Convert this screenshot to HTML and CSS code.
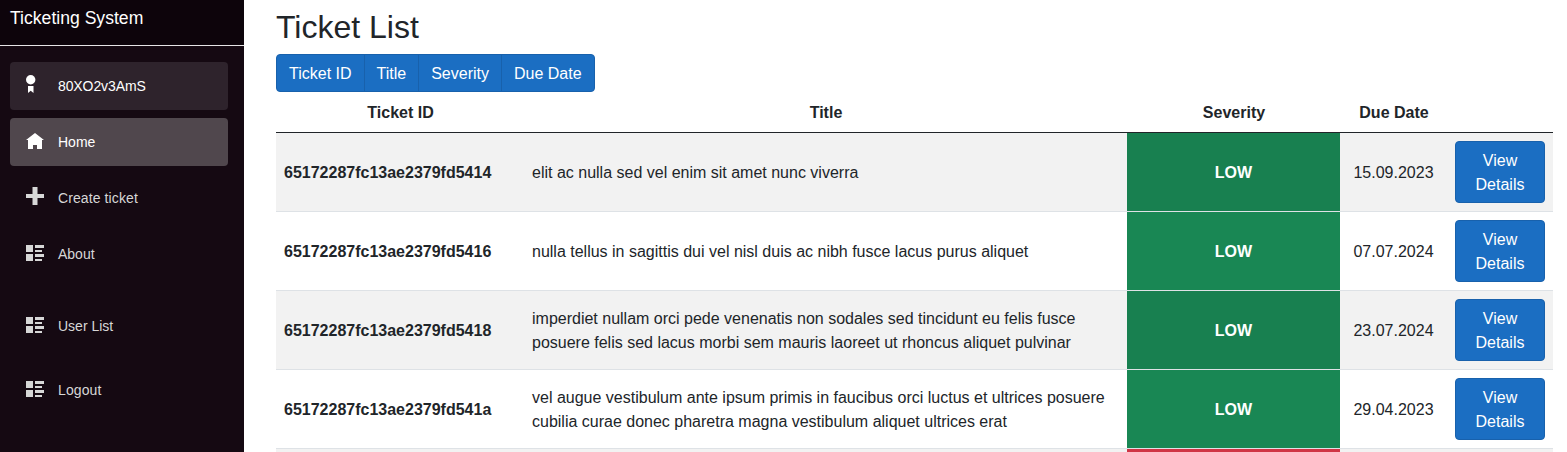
FILE: index.html
```
<!DOCTYPE html>
<html lang="en">
<head>
<meta charset="utf-8">
<title>Ticket List</title>
<link rel="stylesheet" href="styles.css">
</head>
<body>
<svg class="defs" width="0" height="0">
  <symbol id="badge" viewBox="0 0 18 18"><circle cx="4.7" cy="4.7" r="4.7"/><path d="M2 11h5.500v7L4.700 15.800 2 18z"/></symbol>
  <symbol id="home" viewBox="0 0 18 18"><path d="M9 2 0 9h2v9h5v-4h4v4h5V9h2z"/></symbol>
  <symbol id="plus" viewBox="0 0 18 18"><path d="M6.500 0h5v7H18v4h-6.500v7h-5v-7H0V7h6.500z"/></symbol>
  <symbol id="list" viewBox="0 0 18 18"><path d="M0 2h7v7H0zM0 11h7v7H0zM9 2h9v3H9zM9 7h7v2H9zM9 11h9v3H9zM9 16h7v2H9z"/></symbol>
</svg>
<div class="page">
  <aside class="sidebar">
    <div class="brand">Ticketing System</div>
    <nav class="nav">
      <a class="item user"><svg class="icon"><use href="#badge"/></svg>80XO2v3AmS</a>
      <a class="item active"><svg class="icon"><use href="#home"/></svg>Home</a>
      <a class="item"><svg class="icon"><use href="#plus"/></svg><span class="wide">Create ticket</span></a>
      <a class="item about"><svg class="icon"><use href="#list"/></svg>About</a>
      <a class="item users"><svg class="icon"><use href="#list"/></svg>User List</a>
      <a class="item"><svg class="icon"><use href="#list"/></svg><span class="wide">Logout</span></a>
    </nav>
  </aside>
  <main class="content">
    <h1 class="title">Ticket List</h1>
    <div class="group">
      <button class="btn">Ticket ID</button><button class="btn">Title</button><button class="btn">Severity</button><button class="btn">Due Date</button>
    </div>
    <table class="table">
      <colgroup><col class="c-id"><col class="c-title"><col class="c-sev"><col class="c-date"><col class="c-act"></colgroup>
      <thead><tr><th>Ticket ID</th><th>Title</th><th>Severity</th><th>Due Date</th><th></th></tr></thead>
      <tbody>
        <tr><th class="id">65172287fc13ae2379fd5414</th><td>elit ac nulla sed vel enim sit amet nunc viverra</td><td class="sev low">LOW</td><td class="date">15.09.2023</td><td class="action"><button class="btn view">View Details</button></td></tr>
        <tr><th class="id">65172287fc13ae2379fd5416</th><td>nulla tellus in sagittis dui vel nisl duis ac nibh fusce lacus purus aliquet</td><td class="sev low">LOW</td><td class="date">07.07.2024</td><td class="action"><button class="btn view">View Details</button></td></tr>
        <tr><th class="id">65172287fc13ae2379fd5418</th><td>imperdiet nullam orci pede venenatis non sodales sed tincidunt eu felis fusce posuere felis sed lacus morbi sem mauris laoreet ut rhoncus aliquet pulvinar</td><td class="sev low">LOW</td><td class="date">23.07.2024</td><td class="action"><button class="btn view">View Details</button></td></tr>
        <tr><th class="id">65172287fc13ae2379fd541a</th><td>vel augue vestibulum ante ipsum primis in faucibus orci luctus et ultrices posuere cubilia curae donec pharetra magna vestibulum aliquet ultrices erat</td><td class="sev low">LOW</td><td class="date">29.04.2023</td><td class="action"><button class="btn view">View Details</button></td></tr>
        <tr><th></th><td></td><td class="sev high"></td><td></td><td></td></tr>
      </tbody>
    </table>
  </main>
</div>
</body>
</html>
```
FILE: styles.css
```
* { box-sizing: border-box; }
body { margin: 0; font: 16px/24px "Liberation Sans", Arial, sans-serif; color: #212529; background: #fff; }
.defs { display: none; }
.page { display: flex; height: 452px; overflow: hidden; }
.sidebar { width: 244px; flex: none; background: #150912; }
.brand { height: 46px; padding: 5px 10px 0; font-size: 17.6px; line-height: 26px; color: #fff; background: #0d040b; border-bottom: 1px solid #e6e4e6; }
.nav { display: flex; flex-direction: column; gap: 8px; padding: 16px 16px 0 10px; }
.item { display: flex; align-items: center; height: 48px; padding-left: 16px; border-radius: 4px; font-size: 14px; color: #d7d7d7; }
.wide { letter-spacing: 0.1px; }
.icon { width: 18px; height: 18px; margin: -4px 14px 0 0; fill: currentColor; }
.user { background: #2e232c; color: #fff; letter-spacing: -0.1px; }
.active { background: #50474d; color: #fff; }
.about { margin-bottom: 16px; }
.users { margin-bottom: 8px; }
.content { flex: 1; padding: 8px 14px 0 32px; }
.title { margin: 0 0 8px; font-size: 32px; line-height: 38px; font-weight: 400; }
.group { display: flex; }
.btn { margin: 0; padding: 7px 12px 5px; border: 1px solid #1861ac; border-radius: 4px; background: #1b6ec2; color: #fff; font: inherit; }
.group .btn + .btn { margin-left: -1px; border-top-left-radius: 0; border-bottom-left-radius: 0; }
.group .btn:not(:last-child) { border-top-right-radius: 0; border-bottom-right-radius: 0; }
.table { width: 1277px; table-layout: fixed; border-spacing: 0; }
.c-id { width: 248px; }
.c-title { width: 603px; }
.c-sev { width: 213px; }
.c-date { width: 107px; }
.c-act { width: 106px; }
.table th, .table td { padding: 9px 8px 7px; border-bottom: 1px solid #dee2e6; vertical-align: middle; }
.table thead th { padding-left: 9px; border-bottom-color: #212529; text-align: center; }
.table tbody tr { height: 79px; }
.table tbody tr:nth-child(odd) { background: #f2f2f2; }
.table .id { text-align: left; }
.table .sev { text-align: center; font-weight: 700; color: #fff; }
.table .action { padding: 8px; }
.low { background: #198754; }
tr:nth-child(odd) .low { background: #188050; }
.high { background: #d03545; }
.date { text-align: center; }
.view { display: block; width: 90px; }
```
